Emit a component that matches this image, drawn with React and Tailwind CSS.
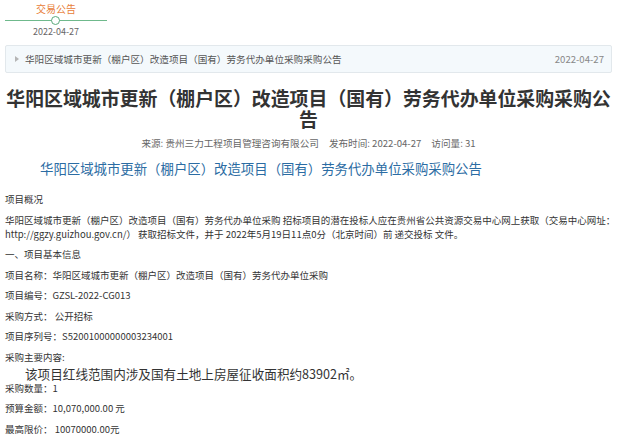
const font = { fontFamily: '"Noto Sans CJK SC", "Noto Sans", sans-serif' };

const Timeline = () => (
    <div className="w-[102px] flex flex-col items-center pt-[3px]">
        <div className="text-[10px] leading-[12px] text-[#e8803a]">交易公告</div>
        <div className="relative w-full h-[11px] flex items-center">
            <div className="w-full h-[1.5px] bg-[#6fb98c]" />
            <div className="absolute left-[46px] top-[1px] w-[9px] h-[9px] rounded-full border-[1.5px] border-[#5aa97b] bg-white" />
        </div>
        <div className="text-[9px] leading-[12px] text-[#666]">2022-04-27</div>
    </div>
)

const Row = ({ children, className = "" }) => (
    <p className={"text-[9.5px] leading-[14px] text-[#333] mb-[6.5px] " + className}>{children}</p>
)

export default function App() {
    return (
        <div className="w-[617px] h-[438px] overflow-hidden bg-white px-[5px]" style={font}>
            <Timeline />

            <div className="mt-[7px] h-[28px] flex items-center justify-between border border-[#e2e8ec] rounded-[2px] bg-[#f4f9fc] pl-[9px] pr-[7px]">
                <div className="flex items-center">
                    <span className="w-0 h-0 border-y-[3px] border-y-transparent border-l-[4px] border-l-[#b5b5b5] mr-[6px]" />
                    <span className="text-[9.6px] text-[#555]">华阳区域城市更新（棚户区）改造项目（国有）劳务代办单位采购采购公告</span>
                </div>
                <span className="text-[9.6px] text-[#888]">2022-04-27</span>
            </div>

            <h1 className="mt-[14px] -mx-[2px] text-center text-[18.9px] leading-[21px] font-bold text-[#333]">
                华阳区域城市更新（棚户区）改造项目（国有）劳务代办单位采购采购公告
            </h1>

            <div className="mt-[7px] text-center text-[9.6px] leading-[14px] text-[#666]">
                来源: 贵州三力工程项目管理咨询有限公司<span className="inline-block w-[10px]" />发布时间: 2022-04-27<span className="inline-block w-[10px]" />访问量: 31
            </div>

            <div className="mt-[8px] pl-[35px] text-[13.4px] leading-[20px] text-[#2b6ca3]">
                华阳区域城市更新（棚户区）改造项目（国有）劳务代办单位采购采购公告
            </div>

            <div className="mt-[14px]">
                <Row>项目概况</Row>
                <Row className="-mr-[4px]">
                    华阳区域城市更新（棚户区）改造项目（国有）劳务代办单位采购 招标项目的潜在投标人应在贵州省公共资源交易中心网上获取（交易中心网址：<br />http://ggzy.guizhou.gov.cn/） 获取招标文件，并于 2022年5月19日11点0分（北京时间）前 递交投标 文件。
                </Row>
                <Row>一、项目基本信息</Row>
                <Row>项目名称：华阳区域城市更新（棚户区）改造项目（国有）劳务代办单位采购</Row>
                <Row>项目编号：GZSL-2022-CG013</Row>
                <Row>采购方式： 公开招标</Row>
                <Row>项目序列号：S52001000000003234001</Row>
                <Row className="!mb-[3px]">采购主要内容:</Row>
                <div className="pl-[20px] text-[12.6px] leading-[14px] text-[#333]">该项目红线范围内涉及国有土地上房屋征收面积约83902㎡。</div>
                <Row>采购数量：1</Row>
                <Row>预算金额：10,070,000.00 元</Row>
                <Row>最高限价： 10070000.00元</Row>
            </div>
        </div>
    )
}
